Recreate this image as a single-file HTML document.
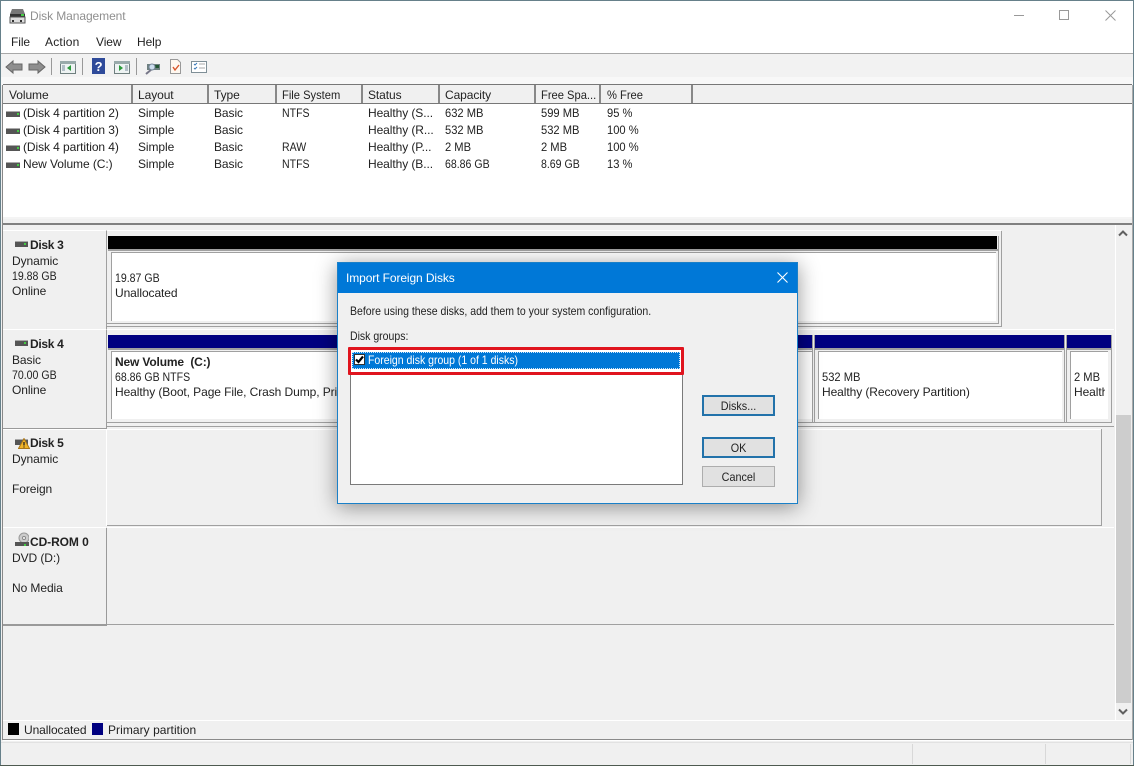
<!DOCTYPE html>
<html><head><meta charset="utf-8"><title>Disk Management</title>
<style>
html,body{margin:0;padding:0;background:#f0f0f0}
#r{position:relative;width:1134px;height:766px;overflow:hidden;background:#f0f0f0;font:12px/15px "Liberation Sans",sans-serif;color:#222;letter-spacing:-.08px;filter:blur(.3px)}
#r div,#r svg{position:absolute}
.t{white-space:nowrap}
.b{font-weight:bold}
.n{letter-spacing:0;transform:scaleX(.93);transform-origin:left center}
.m{letter-spacing:0;transform:scaleX(.88);transform-origin:left center}
.d{letter-spacing:0;transform:scaleX(.875);transform-origin:left center}
.c{letter-spacing:0;transform:scaleX(.9);transform-origin:center center;text-align:center}
</style></head><body><div id="r">

<!-- window chrome -->
<div style="left:0;top:0;width:1134px;height:32px;background:#fff"></div>
<div style="left:0;top:32px;width:1134px;height:21px;background:#fff"></div>
<div style="left:0;top:53px;width:1134px;height:1px;background:#a8a8a8"></div>
<div style="left:0;top:54px;width:1134px;height:23px;background:#f2f2f2"></div>
<div style="left:0;top:77px;width:1134px;height:8px;background:#f8f8f8"></div>

<!-- title -->
<svg style="left:9px;top:8px" width="17" height="16" viewBox="0 0 17 16"><path d="M3 1h11l2 5H1z" fill="#777"/><rect x="1" y="6" width="15" height="3" fill="#333"/><rect x="12" y="6" width="3" height="2" fill="#4c4"/><rect x="1" y="9" width="15" height="6" fill="#ddd" stroke="#555"/><rect x="3" y="12" width="2" height="2" fill="#333"/><rect x="11" y="12" width="2" height="2" fill="#333"/></svg>
<div class="t" style="left:30px;top:9px;color:#8f8f8f;font-size:12px">Disk Management</div>
<div style="left:1014px;top:15px;width:10px;height:1px;background:#999"></div>
<div style="left:1059px;top:10px;width:8px;height:8px;border:1px solid #999"></div>
<svg style="left:1105px;top:10px" width="11" height="11"><path d="M0.500 0.500L10.500 10.500M10.500 0.500L0.500 10.500" stroke="#999" stroke-width="1"/></svg>

<!-- menu -->
<div class="t" style="left:11px;top:35px">File</div>
<div class="t" style="left:45px;top:35px;letter-spacing:.2px">Action</div>
<div class="t" style="left:96px;top:35px">View</div>
<div class="t" style="left:137px;top:35px">Help</div>

<!-- toolbar -->
<svg style="left:5px;top:58px" width="215" height="18" viewBox="0 0 215 18">
<path d="M1 9L8 3v3h9v6H8v3z" fill="#8e8e8e" stroke="#666"/>
<path d="M40 9L33 3v3h-9v6h9v3z" fill="#8e8e8e" stroke="#666"/>
<rect x="46" y="0" width="1" height="17" fill="#999"/>
<rect x="55.500" y="3.500" width="15" height="12" fill="#eef3f3" stroke="#6f7f7f"/><rect x="55" y="3" width="16" height="3" fill="#9aa"/><path d="M66 7v6l-4-3z" fill="#2a9a3a"/><path d="M57 8h3M57 10h3M57 12h3" stroke="#789"/>
<rect x="77" y="0" width="1" height="17" fill="#999"/>
<rect x="87" y="0" width="13" height="16" fill="#2f4b9a"/><text x="93.500" y="13" text-anchor="middle" font-family="Liberation Sans" font-size="13" font-weight="bold" fill="#fff">?</text>
<rect x="109.500" y="3.500" width="15" height="12" fill="#eef3f3" stroke="#6f7f7f"/><rect x="109" y="3" width="16" height="3" fill="#9aa"/><path d="M114 7v6l4-3z" fill="#2a9a3a"/><path d="M120 8h3M120 10h3M120 12h3" stroke="#789"/>
<rect x="131" y="0" width="1" height="17" fill="#999"/>
<path d="M141 16l6-5" stroke="#778" stroke-width="2"/><rect x="142" y="6" width="13" height="6" fill="#6e8080"/><rect x="150" y="7" width="4" height="3" fill="#253"/><circle cx="147" cy="9" r="3" fill="#cde" stroke="#789"/>
<path d="M165.500 1.500h7l3 3v11h-10z" fill="#fff8f0" stroke="#999"/><path d="M168 9l2 3 4-5" stroke="#d9562a" fill="none" stroke-width="1.400"/>
<rect x="186.500" y="3.500" width="15" height="11" fill="#fff" stroke="#7f8f97"/><path d="M189 6l1 1 2-2M189 10l1 1 2-2" stroke="#3a7ab8" fill="none"/><path d="M194 6h6M194 10h6" stroke="#aaa"/>
</svg>

<!-- list -->
<div style="left:0;top:85px;width:3px;height:655px;background:#f0f0f0"></div>
<div style="left:0;top:0;width:1px;height:766px;background:#66808a"></div>
<div style="left:2px;top:85px;width:1px;height:655px;background:#888"></div>
<div style="left:0;top:0;width:1134px;height:1px;background:#66808a"></div>
<div style="left:1133px;top:0;width:1px;height:766px;background:#66808a"></div>
<div style="left:3px;top:103px;width:1129px;height:116px;background:#fff"></div>
<div style="left:3px;top:84px;width:1129px;height:1px;background:#777"></div>
<div style="left:3px;top:85px;width:1129px;height:18px;background:#f0f0f0"></div>
<div style="left:3px;top:103px;width:1129px;height:1px;background:#777"></div>
<div style="left:1132px;top:85px;width:1px;height:655px;background:#aaa"></div>
<div style="left:131px;top:85px;width:2px;height:18px;background:#888"></div>
<div style="left:207px;top:85px;width:2px;height:18px;background:#888"></div>
<div style="left:275px;top:85px;width:2px;height:18px;background:#888"></div>
<div style="left:361px;top:85px;width:2px;height:18px;background:#888"></div>
<div style="left:438px;top:85px;width:2px;height:18px;background:#888"></div>
<div style="left:534px;top:85px;width:2px;height:18px;background:#888"></div>
<div style="left:599px;top:85px;width:2px;height:18px;background:#888"></div>
<div style="left:691px;top:85px;width:2px;height:18px;background:#888"></div>

<div class="t" style="left:9px;top:88px">Volume</div>
<div class="t" style="left:138px;top:88px">Layout</div>
<div class="t" style="left:214px;top:88px">Type</div>
<div class="t n" style="left:282px;top:88px">File System</div>
<div class="t" style="left:368px;top:88px">Status</div>
<div class="t" style="left:445px;top:88px">Capacity</div>
<div class="t n" style="left:541px;top:88px">Free Spa...</div>
<div class="t n" style="left:607px;top:88px">% Free</div>

<!-- rows -->
<div style="left:6px;top:111px;width:14px;height:5px;background:#555;border-top:1px solid #aaa"></div><div style="left:17px;top:113px;width:2px;height:2px;background:#4c4"></div>
<div style="left:6px;top:128px;width:14px;height:5px;background:#555;border-top:1px solid #aaa"></div><div style="left:17px;top:130px;width:2px;height:2px;background:#4c4"></div>
<div style="left:6px;top:145px;width:14px;height:5px;background:#555;border-top:1px solid #aaa"></div><div style="left:17px;top:147px;width:2px;height:2px;background:#4c4"></div>
<div style="left:6px;top:162px;width:14px;height:5px;background:#555;border-top:1px solid #aaa"></div><div style="left:17px;top:164px;width:2px;height:2px;background:#4c4"></div>

<div class="t" style="left:23px;top:106px">(Disk 4 partition 2)</div><div class="t" style="left:138px;top:106px">Simple</div><div class="t" style="left:214px;top:106px">Basic</div><div class="t m" style="left:282px;top:106px">NTFS</div><div class="t" style="left:368px;top:106px">Healthy (S...</div><div class="t n" style="left:445px;top:106px">632 MB</div><div class="t n" style="left:541px;top:106px">599 MB</div><div class="t n" style="left:607px;top:106px">95 %</div>
<div class="t" style="left:23px;top:123px">(Disk 4 partition 3)</div><div class="t" style="left:138px;top:123px">Simple</div><div class="t" style="left:214px;top:123px">Basic</div><div class="t" style="left:368px;top:123px">Healthy (R...</div><div class="t n" style="left:445px;top:123px">532 MB</div><div class="t n" style="left:541px;top:123px">532 MB</div><div class="t n" style="left:607px;top:123px">100 %</div>
<div class="t" style="left:23px;top:140px">(Disk 4 partition 4)</div><div class="t" style="left:138px;top:140px">Simple</div><div class="t" style="left:214px;top:140px">Basic</div><div class="t m" style="left:282px;top:140px">RAW</div><div class="t" style="left:368px;top:140px">Healthy (P...</div><div class="t n" style="left:445px;top:140px">2 MB</div><div class="t n" style="left:541px;top:140px">2 MB</div><div class="t n" style="left:607px;top:140px">100 %</div>
<div class="t" style="left:23px;top:157px">New Volume (C:)</div><div class="t" style="left:138px;top:157px">Simple</div><div class="t" style="left:214px;top:157px">Basic</div><div class="t m" style="left:282px;top:157px">NTFS</div><div class="t" style="left:368px;top:157px">Healthy (B...</div><div class="t m" style="left:445px;top:157px">68.86 GB</div><div class="t m" style="left:541px;top:157px">8.69 GB</div><div class="t n" style="left:607px;top:157px">13 %</div>

<!-- splitter -->
<div style="left:3px;top:217px;width:1129px;height:2px;background:#f4f4f4"></div>
<div style="left:3px;top:223px;width:1129px;height:2px;background:#808080"></div>

<!-- Disk 3 -->
<div style="left:3px;top:230px;width:103px;height:98px;background:#f0f0f0;border-top:1px solid #fff;border-right:1px solid #9a9a9a;border-bottom:2px solid #9a9a9a"></div>
<div style="left:107px;top:230px;width:894px;height:1px;background:#fff"></div>
<div style="left:108px;top:236px;width:889px;height:13px;background:#000"></div>
<div style="left:108px;top:249px;width:890px;height:2px;background:#a0a0a0"></div>
<div style="left:106px;top:236px;width:1px;height:90px;background:#a0a0a0"></div>
<div style="left:111px;top:252px;width:884px;height:68px;background:#fff;border-top:1px solid #a0a0a0;border-left:1px solid #a0a0a0"></div>
<div style="left:998px;top:236px;width:1px;height:87px;background:#a0a0a0"></div>
<div style="left:1001px;top:231px;width:1px;height:96px;background:#a0a0a0"></div>
<div style="left:107px;top:323px;width:892px;height:1px;background:#a0a0a0"></div>
<div style="left:107px;top:326px;width:895px;height:1px;background:#a0a0a0"></div>

<div style="left:15px;top:241px;width:13px;height:5px;background:#555;border-top:1px solid #aaa"></div><div style="left:24px;top:243px;width:2px;height:2px;background:#4c4"></div>
<div class="t b" style="left:30px;top:238px;letter-spacing:-.3px">Disk 3</div>
<div class="t" style="left:12px;top:254px">Dynamic</div>
<div class="t m" style="left:12px;top:269px">19.88 GB</div>
<div class="t" style="left:12px;top:284px">Online</div>
<div class="t m" style="left:115px;top:271px">19.87 GB</div>
<div class="t" style="left:115px;top:286px">Unallocated</div>

<!-- Disk 4 -->
<div style="left:3px;top:329px;width:103px;height:98px;background:#f0f0f0;border-top:1px solid #fff;border-right:1px solid #9a9a9a;border-bottom:2px solid #9a9a9a"></div>
<div style="left:107px;top:329px;width:1007px;height:1px;background:#fff"></div>
<div style="left:108px;top:335px;width:1003px;height:13px;background:#000080"></div>
<div style="left:108px;top:348px;width:1003px;height:2px;background:#a0a0a0"></div>
<div style="left:106px;top:335px;width:1px;height:88px;background:#a0a0a0"></div>
<div style="left:111px;top:351px;width:700px;height:67px;background:#fff;border-top:1px solid #a0a0a0;border-left:1px solid #a0a0a0"></div>
<div style="left:818px;top:351px;width:243px;height:67px;background:#fff;border-top:1px solid #a0a0a0;border-left:1px solid #a0a0a0"></div>
<div style="left:1070px;top:351px;width:37px;height:67px;background:#fff;border-top:1px solid #a0a0a0;border-left:1px solid #a0a0a0"></div>
<div style="left:812px;top:335px;width:3px;height:87px;background:#f0f0f0;border-left:1px solid #a0a0a0;border-right:1px solid #a0a0a0;box-sizing:border-box"></div>
<div style="left:1064px;top:335px;width:3px;height:87px;background:#f0f0f0;border-left:1px solid #a0a0a0;border-right:1px solid #a0a0a0;box-sizing:border-box"></div>
<div style="left:1111px;top:335px;width:1px;height:87px;background:#a0a0a0"></div>
<div style="left:107px;top:422px;width:1005px;height:1px;background:#a0a0a0"></div>
<div style="left:107px;top:426px;width:1007px;height:1px;background:#a0a0a0"></div>

<div style="left:15px;top:340px;width:13px;height:5px;background:#555;border-top:1px solid #aaa"></div><div style="left:24px;top:342px;width:2px;height:2px;background:#4c4"></div>
<div class="t b" style="left:30px;top:337px;letter-spacing:-.3px">Disk 4</div>
<div class="t" style="left:12px;top:353px">Basic</div>
<div class="t m" style="left:12px;top:368px">70.00 GB</div>
<div class="t" style="left:12px;top:383px">Online</div>
<div class="t b" style="left:115px;top:355px;letter-spacing:-.15px">New Volume&nbsp; (C:)</div>
<div class="t m" style="left:115px;top:370px">68.86 GB NTFS</div>
<div class="t" style="left:115px;top:385px">Healthy (Boot, Page File, Crash Dump, Primary Partition)</div>
<div class="t n" style="left:822px;top:370px">532 MB</div>
<div class="t" style="left:822px;top:385px">Healthy (Recovery Partition)</div>
<div class="t n" style="left:1074px;top:370px">2 MB</div>
<div class="t" style="left:1074px;top:385px;width:31px;overflow:hidden">Healthy</div>

<!-- Disk 5 -->
<div style="left:3px;top:429px;width:103px;height:97px;background:#f0f0f0;border-top:1px solid #fff;border-bottom:1px solid #fff"></div>
<div style="left:106px;top:429px;width:1px;height:97px;background:#fff"></div>
<div style="left:107px;top:429px;width:994px;height:1px;background:#fff"></div>
<div style="left:1101px;top:429px;width:1px;height:97px;background:#a0a0a0"></div>
<div style="left:107px;top:525px;width:995px;height:1px;background:#a0a0a0"></div>
<div style="left:107px;top:527px;width:1007px;height:1px;background:#fff"></div>
<div style="left:15px;top:439px;width:13px;height:5px;background:#555;border-top:1px solid #aaa"></div>
<svg style="left:18px;top:438px" width="12" height="11"><path d="M6 .500L11.500 10.500H.500z" fill="#f0b429" stroke="#a8761a"/><path d="M6 4v3.500M6 8.500v1" stroke="#222" stroke-width="1.300"/></svg>
<div class="t b" style="left:30px;top:436px;letter-spacing:-.3px">Disk 5</div>
<div class="t" style="left:12px;top:452px">Dynamic</div>
<div class="t" style="left:12px;top:482px">Foreign</div>

<!-- CD-ROM -->
<div style="left:3px;top:528px;width:103px;height:96px;background:#f0f0f0;border-right:1px solid #9a9a9a;border-bottom:2px solid #9a9a9a"></div>
<div style="left:107px;top:624px;width:1007px;height:1px;background:#a0a0a0"></div>
<svg style="left:15px;top:532px" width="14" height="15"><circle cx="9" cy="6" r="5" fill="#ccc" stroke="#999"/><circle cx="9" cy="6" r="1.500" fill="#fff" stroke="#888"/><rect x="0" y="10" width="14" height="4" fill="#555"/><rect x="9" y="12" width="2" height="2" fill="#4c4"/></svg>
<div class="t b" style="left:30px;top:535px">CD-ROM 0</div>
<div class="t" style="left:12px;top:551px">DVD (D:)</div>
<div class="t" style="left:12px;top:581px">No Media</div>

<!-- scrollbar -->
<div style="left:1115px;top:225px;width:16px;height:495px;background:#f0f0f0;border-left:1px solid #fff"></div>
<div style="left:1116px;top:415px;width:15px;height:288px;background:#cdcdcd"></div>
<svg style="left:1118px;top:230px" width="10" height="7"><path d="M1 5.500L5 1.500L9 5.500" fill="none" stroke="#606060" stroke-width="2"/></svg>
<svg style="left:1118px;top:708px" width="10" height="7"><path d="M1 1.500L5 5.500L9 1.500" fill="none" stroke="#606060" stroke-width="2"/></svg>

<!-- legend -->
<div style="left:3px;top:720px;width:1129px;height:1px;background:#fff"></div>
<div style="left:3px;top:739px;width:1129px;height:1px;background:#8a8a8a"></div>
<div style="left:3px;top:740px;width:1130px;height:1px;background:#fff"></div>
<div style="left:8px;top:723px;width:11px;height:12px;background:#000"></div>
<div class="t" style="left:24px;top:723px">Unallocated</div>
<div style="left:92px;top:723px;width:11px;height:12px;background:#000080"></div>
<div class="t" style="left:108px;top:723px;letter-spacing:.05px">Primary partition</div>

<!-- status -->
<div style="left:1px;top:742px;width:1132px;height:1px;background:#e2e2e2"></div>
<div style="left:912px;top:744px;width:1px;height:20px;background:#d8d8d8"></div>
<div style="left:1045px;top:744px;width:1px;height:20px;background:#d8d8d8"></div>
<div style="left:1130px;top:744px;width:1px;height:20px;background:#d8d8d8"></div>
<div style="left:0;top:765px;width:1134px;height:1px;background:#4e5a50"></div>

<!-- dialog -->
<div style="left:337px;top:262px;width:461px;height:242px;background:#f0f0f0;box-shadow:0 3px 20px rgba(0,0,0,.42)"></div>
<div style="left:337px;top:262px;width:459px;height:240px;border:1px solid #1a80c8"></div>
<div style="left:338px;top:263px;width:459px;height:30px;background:#0078d7"></div>
<div class="t" style="left:346px;top:271px;color:#fff;font-size:12px;letter-spacing:-.1px">Import Foreign Disks</div>
<svg style="left:777px;top:272px" width="11" height="11"><path d="M0.500 0.500L10.500 10.500M10.500 0.500L0.500 10.500" stroke="#fff" stroke-width="1.100"/></svg>
<div class="t d" style="left:350px;top:304px">Before using these disks, add them to your system configuration.</div>
<div class="t d" style="left:350px;top:329px">Disk groups:</div>
<div style="left:350px;top:347px;width:331px;height:136px;background:#fff;border:1px solid #7a7a7a"></div>
<div style="left:352px;top:352px;width:326px;height:15px;background:#0078d7;border:1px dotted #cfe6f8"></div>
<div style="left:354px;top:354px;width:11px;height:11px;background:#fff;border:1px solid #333;box-sizing:border-box"></div>
<svg style="left:354px;top:354px" width="11" height="11"><path d="M2 5.500L4.500 8L9 2.500" fill="none" stroke="#000" stroke-width="2.200"/></svg>
<div class="t d" style="left:368px;top:353px;color:#fff">Foreign disk group (1 of 1 disks)</div>
<div style="left:348px;top:347px;width:330px;height:22px;border:3px solid #e0141e;border-radius:1px"></div>

<div style="left:702px;top:395px;width:69px;height:17px;background:#e1e1e1;border:2px solid #2272aa"></div>
<div class="t c" style="left:702px;top:399px;width:73px">Disks...</div>
<div style="left:702px;top:437px;width:69px;height:17px;background:#e1e1e1;border:2px solid #2272aa"></div>
<div class="t c" style="left:702px;top:441px;width:73px">OK</div>
<div style="left:702px;top:466px;width:71px;height:19px;background:#e1e1e1;border:1px solid #adadad"></div>
<div class="t c" style="left:702px;top:470px;width:73px">Cancel</div>

</div></body></html>
